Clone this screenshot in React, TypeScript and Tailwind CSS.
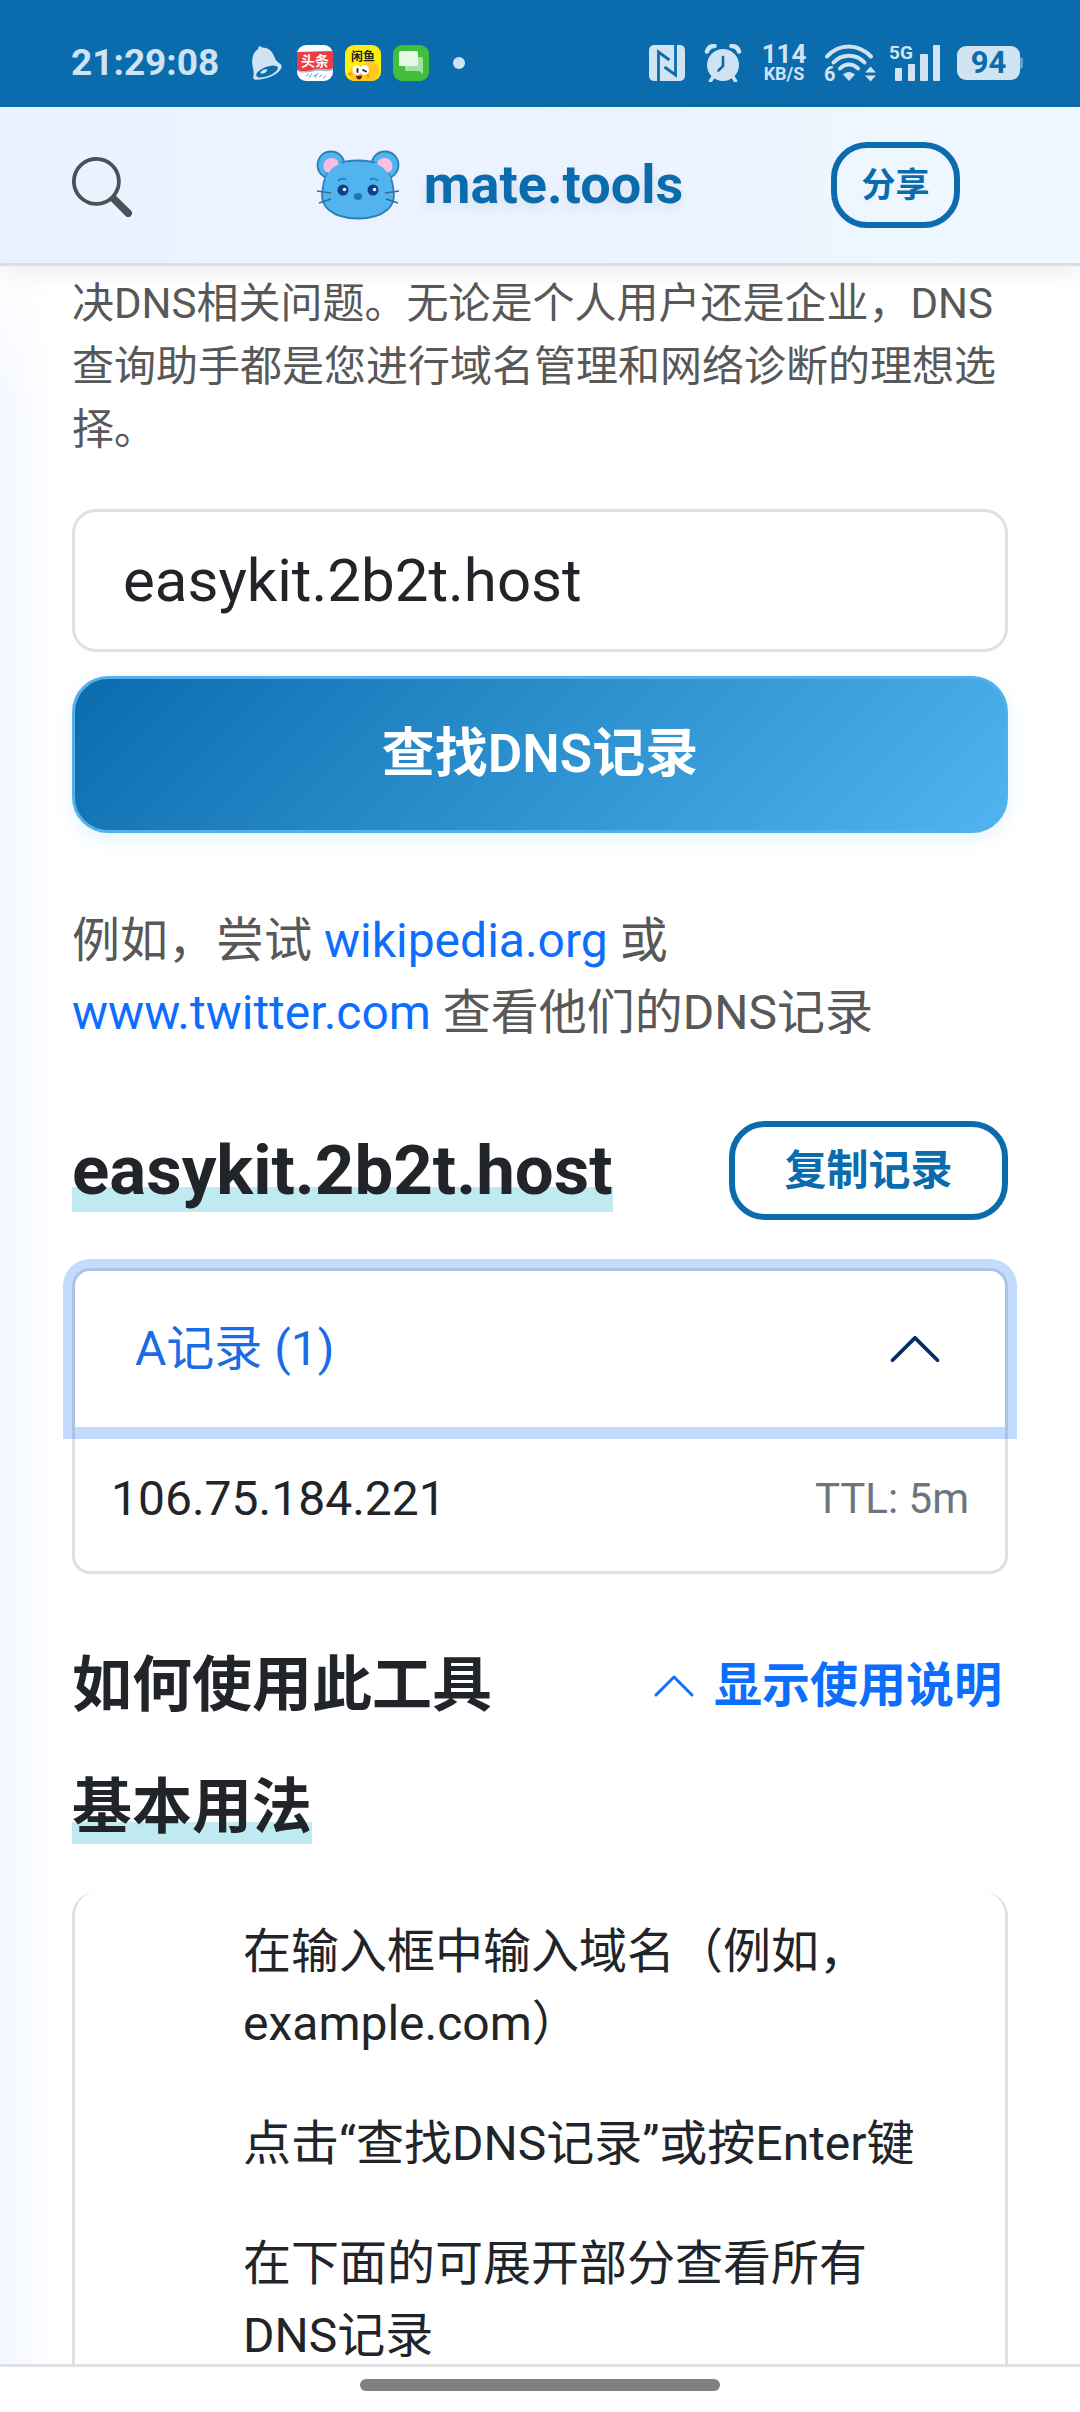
import React, { useState } from 'react';
import { BsChevronUp, BsSearch } from 'react-icons/bs';

const BellIcon = () => (
  <svg viewBox="0 0 30 34" className="h-[34px] w-[30px]" aria-hidden="true">
    <path
      d="M7 0.5c1-.6 2 0 2.600 1 5.500-.4 10.400 3 12.400 8.500 1.200 3.500 2.500 5.500 6 7.800 1.800 1.200 2.200 3.200.8 5.200C25 29 15 33.500 4 33.800c-2 0-3-1-2.600-3 .3-2 .5-3 .2-5C1 21 -.5 18 .4 12.500 1 8 3 5 6.200 3c0-1 .2-2 .8-2.500z"
      fill="#cfe3f3"
    />
    <ellipse cx="15" cy="25.500" rx="11.500" ry="4.600" transform="rotate(-22 15 25.500)" fill="#0b6cad" />
    <path d="M8 27.500c1-3 4-4.500 7-4.300.8 2.500-2.500 5-7 4.300z" fill="#cfe3f3" />
  </svg>
);

const ToutiaoIcon = () => (
  <svg viewBox="0 0 36 36" className="h-9 w-9" aria-hidden="true">
    <rect width="36" height="36" rx="9" fill="#fff" />
    <path d="M0 7l36-1v18c-6 3-12-1-18 1s-12 2-18 0z" fill="#ee3c42" />
    <path d="M0 25c8 3 13 0 19-1s11 2 17-1v2c-6 3-11 0-17 1s-12 3-19 0z" fill="#9fb6e8" />
    <text x="18" y="21" textAnchor="middle" fontSize="14" fontWeight="700" fill="#fff">头条</text>
    <path d="M9 31l3-2m0 4l3-5m1 3l3-1m-1 3l3-5m1 4l3-2m1 3l3-2" stroke="#6f9ce0" fill="none" />
  </svg>
);

const XianyuIcon = () => (
  <svg viewBox="0 0 36 36" className="h-9 w-9" aria-hidden="true">
    <rect width="36" height="36" rx="9" fill="#ffee0a" />
    <path d="M5 33c-2-8 4-14 12-13 5-5 14-4 17 2v6c-1 5-4 8-8 8H12c-4 0-6-1-7-3z" fill="#ffc91f" />
    <ellipse cx="12" cy="25" rx="4.500" ry="5" fill="#fff" />
    <ellipse cx="19.500" cy="25" rx="4.500" ry="5" fill="#fff" />
    <path d="M12.500 24v3M18 25l3 1.500" stroke="#222" strokeWidth="1.800" strokeLinecap="round" />
    <path d="M11 31l6-.5c0 3-1.500 4-3 4s-2.800-1.500-3-3.500z" fill="#7a1a10" />
    <circle cx="5" cy="29" r="1.800" fill="#ff8f1f" />
    <circle cx="23" cy="31" r="1.800" fill="#ff8f1f" />
    <text x="18" y="15.500" textAnchor="middle" fontSize="12" fontWeight="700" fill="#222">闲鱼</text>
  </svg>
);

const ChatIcon = () => (
  <svg viewBox="0 0 36 36" className="h-9 w-9" aria-hidden="true">
    <rect width="36" height="36" rx="9" fill="#43bd3c" />
    <path d="M14 12h14a2 2 0 0 1 2 2v15l-4-3H14a2 2 0 0 1-2-2V14a2 2 0 0 1 2-2z" fill="#a5e0a3" />
    <path d="M8 6h15a2 2 0 0 1 2 2v11a2 2 0 0 1-2 2H12l-6 0V8a2 2 0 0 1 2-2z" fill="#e6f7e5" />
  </svg>
);

const NfcIcon = () => (
  <svg viewBox="0 0 36 36" className="h-9 w-9" aria-hidden="true">
    <rect width="36" height="36" rx="5" fill="#cfe3f3" />
    <path d="M9.500 36V7l11 8M26.500 0v30l-11-8" stroke="#0b6cad" strokeWidth="2.800" fill="none" />
  </svg>
);

const AlarmIcon = () => (
  <svg viewBox="0 0 38 38" className="h-[38px] w-[38px]" aria-hidden="true">
    <circle cx="19" cy="21" r="16" fill="#cfe3f3" />
    <path d="M3 7.500C4 4 7 2 10.500 2M35 7.500C34 4 31 2 27.500 2" stroke="#cfe3f3" strokeWidth="4.500" strokeLinecap="round" />
    <path d="M9 33l-2.500 4M29 33l2.500 4" stroke="#cfe3f3" strokeWidth="3.500" strokeLinecap="round" />
    <path d="M19 13v9l-4.500 4.500" stroke="#0b6cad" strokeWidth="2.600" fill="none" strokeLinecap="round" />
  </svg>
);

const WifiIcon = () => (
  <svg viewBox="0 0 51 38" className="h-[38px] w-[51px] overflow-visible" aria-hidden="true">
    <g stroke="#cfe3f3" strokeWidth="4" fill="none" strokeLinecap="round">
      <path d="M3 12.500C15-1 34-1 47 12.500" />
      <path d="M9.500 18.500C18 9.500 32 9.500 40.500 18.500" />
      <path d="M16 24.500C21 19 29 19 34 24.500" />
    </g>
    <path d="M19 30.500c4-3.500 8-3.500 12 0l-6 6.500z" fill="#cfe3f3" />
    <path d="M41 28.500l5.500-6 5.500 6zM41 31.500l5.500 6 5.500-6z" fill="#cfe3f3" />
    <text x="0" y="37" fontSize="20" fontWeight="700" fill="#cfe3f3">6</text>
  </svg>
);

const SignalIcon = () => (
  <svg viewBox="0 0 52 38" className="h-[38px] w-[52px] overflow-visible" aria-hidden="true">
    <text x="0" y="15" fontSize="19" fontWeight="700" fill="#cfe3f3">5G</text>
    <g fill="#cfe3f3">
      <rect x="6" y="24" width="7" height="13" rx="1" />
      <rect x="19" y="20" width="7" height="17" rx="1" />
      <rect x="31" y="10" width="8" height="27" rx="1" />
      <rect x="44" y="1" width="7" height="36" rx="1" />
    </g>
  </svg>
);

const MouseLogo = () => (
  <svg viewBox="0 0 84 70" className="h-[70px] w-[84px]" aria-hidden="true">
    <g fill="#51b4ee" stroke="#2e7fb5" strokeWidth="1.800">
      <circle cx="15" cy="15" r="13.500" />
      <circle cx="69" cy="15" r="13.500" />
      <path d="M42 10.500c8 0 15 .8 20 3.500 8 4 14 13 15 23 2 10 1 17-6 23-7 6-17 8.500-29 8.500S20 66 13 60C6 54 5 47 7 37c1-10 7-19 15-23 5-2.700 12-3.500 20-3.500z" />
    </g>
    {/* hide the outline where the ears join the head */}
    <path d="M9 30c2-8 7-14 16-18l4 4-14 18zM75 30c-2-8-7-14-16-18l-4 4 14 18z" fill="#51b4ee" />
    <path d="M8 19c-2-6 2-11 7.500-11 5 0 7.500 3 7 6.500-4 1.500-8 5-9.500 8-2 .5-4-1-5-3.500z" fill="#f9bfe3" />
    <path d="M76 19c2-6-2-11-7.500-11-5 0-7.500 3-7 6.500 4 1.500 8 5 9.500 8 2 .5 4-1 5-3.500z" fill="#f9bfe3" />
    <path d="M22 31c2-2.500 5-3 8-1.500M54 29.500c3-1.500 6-1 8 1.500" stroke="#2e7fb5" strokeWidth="1.800" fill="none" />
    <circle cx="27" cy="40" r="5.500" fill="#123f86" />
    <circle cx="57" cy="40" r="5.500" fill="#123f86" />
    <circle cx="28.500" cy="39.500" r="1.800" fill="#e8f2ff" />
    <circle cx="58.500" cy="39.500" r="1.800" fill="#e8f2ff" />
    <ellipse cx="42" cy="46.500" rx="4.200" ry="3.400" fill="#1e78ae" />
    <path d="M1 41l14 2M3 53l12-4M83 41l-14 2M82 53l-12-4" stroke="#3d6d8e" strokeWidth="1.600" />
  </svg>
);

const StatusBar = () => (
  <div className="flex h-[107px] shrink-0 items-center justify-between bg-[#0b6cad] pt-[18px] pr-[57px] pl-[71px] text-[#cfe3f3]">
    <div className="flex items-center">
      <span className="w-[181px] text-[37px] leading-none font-bold">21:29:08</span>
      <BellIcon />
      <div className="ml-[15px] flex items-center gap-3">
        <ToutiaoIcon />
        <XianyuIcon />
        <ChatIcon />
      </div>
      <span className="ml-6 h-3 w-3 rounded-full bg-[#cfe3f3]" />
    </div>
    <div className="flex items-center">
      <NfcIcon />
      <span className="ml-[19px]"><AlarmIcon /></span>
      <div className="ml-5 flex w-[44px] flex-col items-center font-bold">
        <span className="text-[26px] leading-[22px]">114</span>
        <span className="text-[18px] leading-[18px]">KB/S</span>
      </div>
      <span className="ml-[18px]"><WifiIcon /></span>
      <span className="ml-[14px]"><SignalIcon /></span>
      <div className="ml-4 flex items-center">
        <span className="flex h-[34px] w-[63px] items-center justify-center rounded-[9px] bg-[#cfe3f3] text-[31px] leading-none font-bold text-[#0b6cad]">
          94
        </span>
        <span className="h-3 w-[3px] rounded-r bg-[#5f9fcc]" />
      </div>
    </div>
  </div>
);

const SiteHeader = () => (
  <header className="relative z-10 flex h-[159px] shrink-0 items-center justify-between border-b-3 border-[#dadfe5] bg-linear-to-r from-[#e9f3ff] via-[#ebf3ff] to-[#eff7ff] pr-[120px] pl-[72px] shadow-[0_6px_24px_rgba(0,0,0,0.08)]">
    <button type="button" aria-label="搜索" className="w-24 pt-1 text-[#4d5154]">
      <BsSearch className="h-[60px] w-[60px]" />
    </button>
    <a href="#" className="flex items-center gap-6 text-[54px] leading-none font-bold text-[#0b6cad] [text-shadow:0_6px_12px_rgba(0,0,0,0.08)]">
      <MouseLogo />
      mate.tools
    </a>
    <button
      type="button"
      className="h-[86px] w-[129px] rounded-[36px] border-6 border-[#0b6cad] text-[34px] leading-none font-semibold text-[#0b6cad]"
    >
      分享
    </button>
  </header>
);

const steps = [
  '在输入框中输入域名（例如，example.com）',
  '点击“查找DNS记录”或按Enter键',
  '在下面的可展开部分查看所有DNS记录',
];

const App = () => {
  const [domain, setDomain] = useState('easykit.2b2t.host');
  const [open, setOpen] = useState(true);
  const [showHelp, setShowHelp] = useState(true);

  return (
    <div
      lang="zh-CN"
      className="flex h-screen flex-col bg-white font-[Roboto,'Noto_Sans_CJK_SC',sans-serif] text-[#212529]"
    >
      <StatusBar />
      <SiteHeader />

      <main className="min-h-0 flex-1 overflow-y-auto bg-[linear-gradient(to_bottom,white,transparent_160px),linear-gradient(to_right,#f2f6ff,white_54px)] px-[72px] pt-[6px] [scrollbar-width:none]">
        <p className="text-[42px] leading-[63px] text-[#585858]">
          决DNS相关问题。无论是个人用户还是企业，DNS查询助手都是您进行域名管理和网络诊断的理想选择。
        </p>

        <form className="mt-12 flex flex-col gap-6" onSubmit={e => e.preventDefault()}>
          <input
            type="text"
            aria-label="域名"
            value={domain}
            onChange={e => setDomain(e.target.value)}
            className="h-[143px] w-full rounded-[24px] border-3 border-[#dfe1e4] bg-white px-12 text-[60px]"
          />
          <button
            type="submit"
            className="h-[157px] w-full rounded-[36px] border-3 border-[#54b0e8] bg-[linear-gradient(135deg,#0b6cad,#4fb4f0)] text-[53px] font-semibold text-white shadow-[0_6px_18px_rgba(80,180,240,0.15)]"
          >
            查找DNS记录
          </button>
        </form>

        <p className="mt-[72px] text-[48px] leading-[72px] text-[#585858]">
          例如，尝试 <a href="#" className="text-[#0d6efd]">wikipedia.org</a> 或{' '}
          <a href="#" className="text-[#0d6efd]">www.twitter.com</a> 查看他们的DNS记录
        </p>

        <div className="mt-[72px] flex items-center justify-between">
          <h2 className="bg-[linear-gradient(to_bottom,transparent_70%,#c0eaf2_70%)] text-[69px] leading-[83px] font-bold">
            easykit.2b2t.host
          </h2>
          <button
            type="button"
            className="h-[99px] w-[279px] rounded-[36px] border-6 border-[#0b6cad] text-[42px] leading-none font-semibold text-[#0b6cad]"
          >
            复制记录
          </button>
        </div>

        {/* Records accordion */}
        <div className="mt-12 rounded-[18px] border-3 border-[#dfe0e2] bg-white">
          <button
            type="button"
            aria-expanded={open}
            onClick={() => setOpen(!open)}
            className="flex h-[156px] w-full items-center justify-between rounded-t-[15px] px-[60px] text-[48px] text-[#1a6be4] shadow-[0_0_0_12px_rgba(13,110,253,0.25)]"
          >
            A记录 (1)
            <BsChevronUp className="h-[60px] w-[60px] text-[#052c65]" />
          </button>
          {open && (
            <div className="flex items-center justify-between p-9 leading-[72px]">
              <span className="text-[48px]">106.75.184.221</span>
              <span className="text-[42px] text-[#6c757d]">TTL: 5m</span>
            </div>
          )}
        </div>

        <div className="mt-[76px] flex items-center justify-between pr-[6px]">
          <h2 className="text-[60px] leading-[72px] font-bold">如何使用此工具</h2>
          <button
            type="button"
            aria-expanded={showHelp}
            onClick={() => setShowHelp(!showHelp)}
            className="flex items-center gap-4 text-[48px] leading-[72px] font-semibold text-[#0d6efd]"
          >
            <BsChevronUp className="h-12 w-12" />
            显示使用说明
          </button>
        </div>

        {showHelp && (
          <section>
            <h3 className="mt-[50px] w-fit bg-[linear-gradient(to_bottom,transparent_70%,#c0eaf2_70%)] text-[60px] leading-[72px] font-bold">
              基本用法
            </h3>
            <ol className="mt-12 rounded-[24px] border-x-3 border-[#dfe0e2] bg-white pr-[45px] pl-[168px]">
              {steps.map(step => (
                <li key={step} className="py-6 text-[48px] leading-[72px]">
                  {step}
                </li>
              ))}
            </ol>
          </section>
        )}
      </main>

      {/* Gesture bar */}
      <footer className="flex h-12 shrink-0 justify-center border-t-3 border-[#dfe1e4] bg-white pt-3">
        <span className="h-3 w-1/3 rounded-full bg-[#808080]" />
      </footer>
    </div>
  );
};

export default App;
